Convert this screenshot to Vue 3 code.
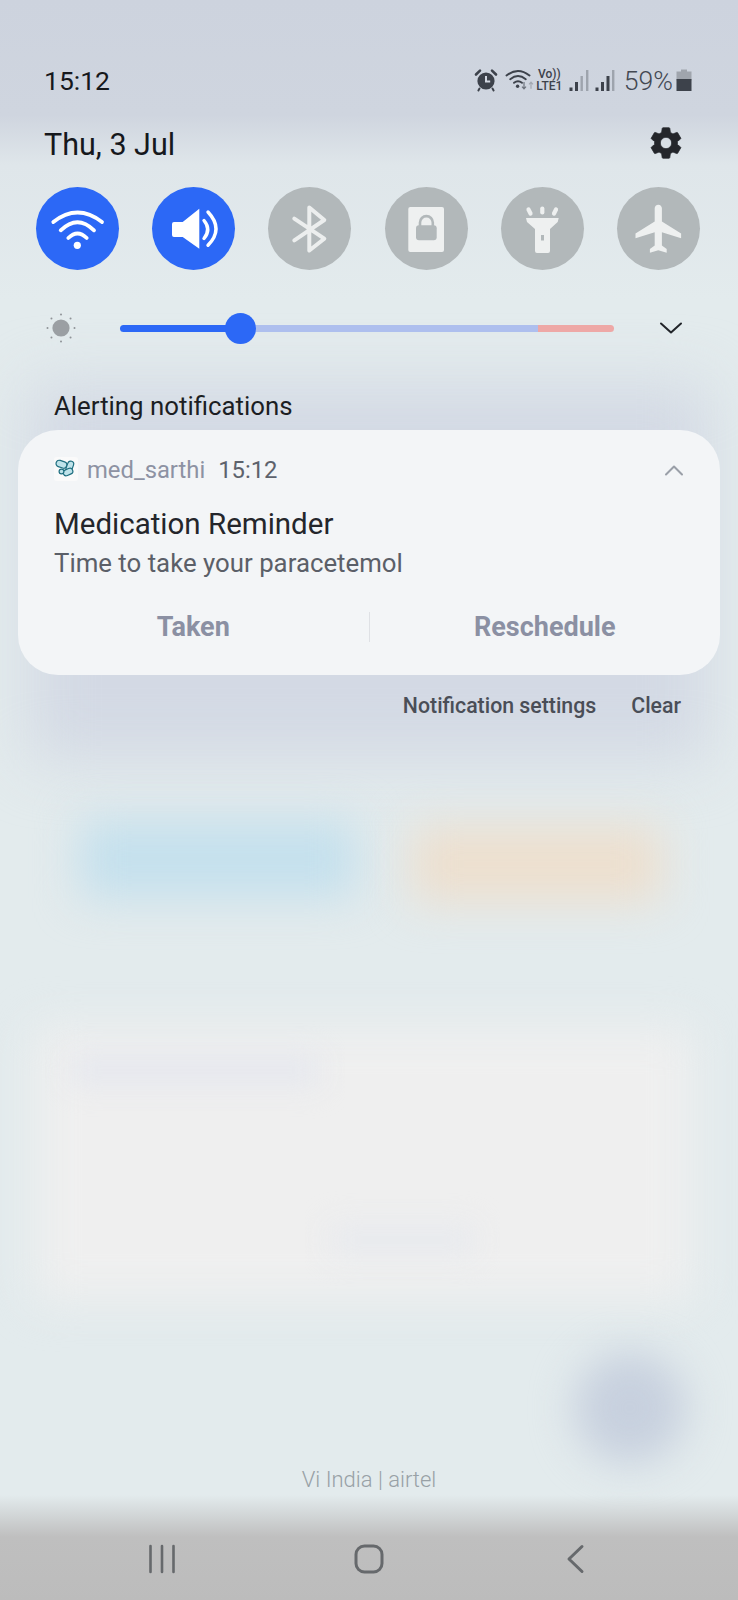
<script setup>
const gearPath = 'M19.14 12.94c.04-.3.06-.61.06-.94 0-.32-.02-.64-.07-.94l2.03-1.58c.18-.14.23-.41.12-.61l-1.92-3.32c-.12-.22-.37-.29-.59-.22l-2.39.96c-.5-.38-1.03-.7-1.62-.94l-.36-2.54c-.04-.24-.24-.41-.48-.41h-3.84c-.24 0-.43.17-.47.41l-.36 2.54c-.59.24-1.13.57-1.62.94l-2.39-.96c-.22-.08-.47 0-.59.22L2.74 8.87c-.12.21-.08.47.12.61l2.03 1.58c-.05.3-.09.63-.09.94s.02.64.07.94l-2.03 1.58c-.18.14-.23.41-.12.61l1.92 3.32c.12.22.37.29.59.22l2.39-.96c.5.38 1.03.7 1.62.94l.36 2.54c.05.24.24.41.48.41h3.84c.24 0 .44-.17.47-.41l.36-2.54c.59-.24 1.13-.56 1.62-.94l2.39.96c.22.08.47 0 .59-.22l1.92-3.32c.12-.22.07-.47-.12-.61l-2.01-1.58zM12 15.6c-1.98 0-3.6-1.62-3.6-3.6s1.62-3.6 3.6-3.6 3.6 1.62 3.6 3.6-1.62 3.6-3.6 3.6z'

// sun rays around the brightness icon
const sunDots = Array.from({ length: 8 }, (_, i) => {
  const a = (i * Math.PI) / 4
  return { x: 15 + Math.cos(a) * 13.5, y: 15 + Math.sin(a) * 13.5 }
})

// blurred shade content behind the panel
const blobs = [
  { name: 'band' },
  { name: 'blue' },
  { name: 'orange' },
  { name: 'panel' },
  { name: 'panel-a' },
  { name: 'panel-b' },
  { name: 'fab' }
]
</script>

<template>
  <div class="shade">
    <div class="backdrop">
      <div v-for="b in blobs" :key="b.name" class="blob" :class="b.name"></div>
    </div>

    <div class="status">
      <span class="clock">15:12</span>
      <div class="status-icons">
        <svg class="ic-alarm" width="24" height="24" viewBox="0 0 24 24">
          <circle cx="12" cy="13" r="8.6" fill="#3d424b" />
          <path d="M12 8v5.4h4.2" fill="none" stroke="#d3d8e2" stroke-width="2" />
          <path d="M2 6.5 6 2.6M22 6.5 18 2.6" stroke="#3d424b" stroke-width="2.6" stroke-linecap="round" />
          <path d="M5.5 20.5 4.4 22.4M18.5 20.5l1.1 1.9" stroke="#3d424b" stroke-width="2" stroke-linecap="round" />
        </svg>
        <svg class="ic-wifi" width="30" height="22" viewBox="0 0 30 22">
          <g fill="none" stroke="#3d424b" stroke-width="1.9" stroke-linecap="round">
            <path d="M1.5 6.5Q13 -2.5 24.5 6.5" />
            <path d="M5.2 10.2Q13 4 20.8 10.2" />
            <path d="M9 13.8Q13 10.6 17 13.8" />
          </g>
          <circle cx="12.6" cy="17.2" r="1.7" fill="#3d424b" />
          <path d="M19 13v6.4M17 17.6l2 2.2 2-2.2" fill="none" stroke="#6c727c" stroke-width="1.2" />
          <path d="M26 19.8v-6.4M24 15.4l2-2.2 2 2.2" fill="none" stroke="#a3a8b1" stroke-width="1.2" />
        </svg>
        <div class="volte"><span>Vo))</span><span>LTE1</span></div>
        <svg class="ic-signal" width="20" height="23" viewBox="0 0 20 23">
          <rect x="0.5" y="18.5" width="3" height="3.5" fill="#3d424b" />
          <rect x="6" y="13" width="3" height="9" fill="#3d424b" />
          <rect x="11.5" y="7" width="2.4" height="15" fill="#9ea4ad" />
          <rect x="17" y="1" width="2.4" height="21" fill="#9ea4ad" />
        </svg>
        <svg class="ic-signal" width="20" height="23" viewBox="0 0 20 23">
          <rect x="0.5" y="18.5" width="3" height="3.5" fill="#3d424b" />
          <rect x="6" y="13" width="3" height="9" fill="#3d424b" />
          <rect x="11.5" y="7" width="3" height="15" fill="#3d424b" />
          <rect x="17" y="1" width="2.4" height="21" fill="#9ea4ad" />
        </svg>
        <span class="battery-text">59%</span>
        <svg class="ic-battery" width="16" height="22" viewBox="0 0 16 22">
          <path d="M5 0.5h6v2h4.5v9H.5v-9H5z" fill="#a0a5ad" />
          <rect x="0.5" y="10" width="15" height="12" fill="#3d424b" />
        </svg>
      </div>
    </div>

    <div class="date-row">
      <span class="date">Thu, 3 Jul</span>
      <svg width="38" height="38" viewBox="0 0 24 24">
        <path :d="gearPath" fill="#24262b" stroke="#24262b" stroke-width="0.5" />
      </svg>
    </div>

    <div class="toggles">
      <div class="toggle on">
        <svg width="83" height="83" viewBox="0 0 83 83">
          <g fill="none" stroke="#fff" stroke-width="3.8" stroke-linecap="round">
            <path d="M17.3 35Q41.5 16 66 35" />
            <path d="M24.7 43.3Q41.5 27 58 43.3" />
            <path d="M32.3 51Q41.5 42 50.7 51" />
          </g>
          <circle cx="41.3" cy="58.3" r="3.6" fill="#fff" />
        </svg>
      </div>
      <div class="toggle on">
        <svg width="83" height="83" viewBox="0 0 83 83">
          <path d="M20 37q0-2 2-2h8.7l16.6-13.3V61.7L30.7 50H22q-2 0-2-2z" fill="#fff" />
          <g fill="none" stroke="#fff" stroke-width="3.4" stroke-linecap="round">
            <path d="M52 33.5Q59.5 42.5 52 51.5" />
            <path d="M56 25Q72 42 56 58.3" />
          </g>
        </svg>
      </div>
      <div class="toggle">
        <svg width="83" height="83" viewBox="0 0 83 83">
          <path d="M26.3 31.7 56.3 51.7 41.3 63.5V20.5L56.3 33 26.3 53.3" fill="none" stroke="#eceeee" stroke-width="4" stroke-linecap="round" stroke-linejoin="round" />
        </svg>
      </div>
      <div class="toggle">
        <svg width="83" height="83" viewBox="0 0 83 83">
          <rect x="23.3" y="20" width="35.7" height="45" rx="2" fill="#eef0f0" />
          <rect x="31" y="38.3" width="20.7" height="15" rx="3" fill="#b2b8ba" />
          <path d="M35 39v-3.5a6.4 6.4 0 0 1 12.8 0V39" fill="none" stroke="#b2b8ba" stroke-width="2.6" />
        </svg>
      </div>
      <div class="toggle">
        <svg width="83" height="83" viewBox="0 0 83 83">
          <path d="M25 31h32.7l-1 4-7.7 7V64q0 2-2 2H36q-2 0-2-2V42l-8-7z" fill="#eef0f0" />
          <rect x="40" y="48" width="3" height="5.5" fill="#b2b8ba" />
          <g stroke="#eef0f0" stroke-width="4.2" stroke-linecap="round">
            <path d="M27.5 22.5 29.5 26.5" />
            <path d="M41.3 21.5V25.5" />
            <path d="M55 22.5 53 26.5" />
          </g>
        </svg>
      </div>
      <div class="toggle">
        <svg width="83" height="83" viewBox="0 0 83 83">
          <path transform="translate(13.7 12.9) scale(2.4)" d="M21 16v-2l-8-5V3.5c0-.83-.67-1.5-1.5-1.5S10 2.67 10 3.5V9l-8 5v2l8-2.5V19l-2 1.5V22l3.5-1 3.5 1v-1.5L13 19v-5.5l8 2.5z" fill="#eef0f0" />
        </svg>
      </div>
    </div>

    <div class="brightness">
      <svg class="sun" width="30" height="30" viewBox="0 0 30 30">
        <circle cx="15" cy="15" r="8.6" fill="#9b9fa3" />
        <circle v-for="(d, i) in sunDots" :key="i" :cx="d.x" :cy="d.y" r="1" fill="#8f9397" />
      </svg>
      <div class="track">
        <div class="track-fill"></div>
        <div class="track-rest"></div>
        <div class="track-high"></div>
        <div class="thumb"></div>
      </div>
      <svg class="expand" width="24" height="14" viewBox="0 0 24 14">
        <path d="M2 2.5 12 11.5 22 2.5" fill="none" stroke="#22252a" stroke-width="2" stroke-linecap="round" stroke-linejoin="round" />
      </svg>
    </div>

    <div class="section-title">Alerting notifications</div>

    <div class="card">
      <div class="card-head">
        <svg class="app-icon" width="24" height="24" viewBox="0 0 24 24">
          <rect width="24" height="24" rx="3" fill="#fafafa" />
          <g fill="#bfe3ea" stroke="#1f6f80" stroke-width="1.2">
            <rect x="2" y="4" width="11" height="6.5" rx="3.2" transform="rotate(18 7.5 7)" />
            <rect x="13" y="4" width="6" height="11" rx="3" transform="rotate(20 16 9)" />
            <rect x="9" y="12" width="10" height="6" rx="3" transform="rotate(-25 14 15)" />
            <circle cx="7.5" cy="14.5" r="2.4" />
          </g>
        </svg>
        <span class="app-name">med_sarthi</span>
        <span class="app-time">15:12</span>
        <svg class="collapse" width="22" height="14" viewBox="0 0 22 14">
          <path d="M3 11.5 11 3.5 19 11.5" fill="none" stroke="#9a9fa8" stroke-width="2" stroke-linecap="round" stroke-linejoin="round" />
        </svg>
      </div>
      <div class="card-title">Medication Reminder</div>
      <div class="card-body">Time to take your paracetemol</div>
      <div class="card-actions">
        <button class="action">Taken</button>
        <span class="action-sep"></span>
        <button class="action">Reschedule</button>
      </div>
    </div>

    <div class="card-links">
      <span>Notification settings</span>
      <span>Clear</span>
    </div>

    <div class="carrier">Vi India | airtel</div>

    <div class="navbar">
      <svg width="40" height="30" viewBox="0 0 40 30">
        <path d="M8.5 2V28M20 2V28M31.5 2V28" stroke="#66696c" stroke-width="2.6" stroke-linecap="round" />
      </svg>
      <svg width="40" height="30" viewBox="0 0 40 30">
        <rect x="7" y="2" width="26" height="26" rx="8.5" fill="none" stroke="#66696c" stroke-width="3" />
      </svg>
      <svg width="40" height="30" viewBox="0 0 40 30">
        <path d="M27 2.5 14 15 27 27.5" fill="none" stroke="#66696c" stroke-width="3" stroke-linecap="round" stroke-linejoin="round" />
      </svg>
    </div>
  </div>
</template>

<style scoped>
.shade {
  position: relative;
  width: 738px;
  height: 1600px;
  overflow: hidden;
  display: flex;
  flex-direction: column;
  font-family: Roboto, "Liberation Sans", sans-serif;
  background: linear-gradient(180deg, #cdd3de 0, #cfd5df 115px, #dfe6ea 165px, #e3ebed 300px, #e3ebed 100%);
}

.backdrop {
  position: absolute;
  inset: 0;
  overflow: hidden;
}

.blob {
  position: absolute;
  filter: blur(22px);
}

.band {
  left: 30px;
  top: 385px;
  width: 678px;
  height: 375px;
  background: #d3d9e4;
  filter: blur(30px);
}

.blue {
  left: 80px;
  top: 820px;
  width: 276px;
  height: 78px;
  background: #c4e0ed;
}

.orange {
  left: 412px;
  top: 826px;
  width: 250px;
  height: 76px;
  background: #eddfce;
}

.panel {
  left: 36px;
  top: 1028px;
  width: 656px;
  height: 272px;
  background: #efefef;
}

.panel-a {
  left: 70px;
  top: 1054px;
  width: 250px;
  height: 32px;
  background: #e6e8ee;
  filter: blur(14px);
}

.panel-b {
  left: 330px;
  top: 1224px;
  width: 145px;
  height: 32px;
  background: #e8eaee;
  filter: blur(14px);
}

.fab {
  left: 574px;
  top: 1352px;
  width: 112px;
  height: 112px;
  border-radius: 50%;
  background: #c7d0de;
  filter: blur(20px);
}

.status,
.date-row,
.toggles,
.brightness,
.section-title,
.card,
.card-links,
.carrier,
.navbar {
  position: relative;
}

.status {
  margin-top: 64px;
  height: 32px;
  padding: 0 46px 0 44px;
  display: flex;
  align-items: center;
  justify-content: space-between;
}

.clock {
  font-size: 26.5px;
  color: #16181c;
}

.status-icons {
  display: flex;
  align-items: center;
}

.volte {
  display: flex;
  flex-direction: column;
  align-items: center;
  width: 27px;
  margin-left: 1px;
  font-size: 12px;
  line-height: 12px;
  font-weight: 500;
  color: #3d424b;
}

.ic-wifi {
  margin-left: 7px;
}

.ic-signal {
  margin-left: 6px;
}

.battery-text {
  margin-left: 9px;
  font-size: 26.6px;
  font-weight: 300;
  color: #434852;
}

.ic-battery {
  margin-left: 3px;
}

.date-row {
  margin-top: 27px;
  height: 40px;
  padding: 0 53px 0 44px;
  display: flex;
  align-items: center;
  justify-content: space-between;
}

.date {
  margin-top: 2px;
  font-size: 30.5px;
  color: #16181c;
}

.toggles {
  margin-top: 24px;
  padding: 0 38px 0 36px;
  display: flex;
  justify-content: space-between;
}

.toggle {
  width: 83px;
  height: 83px;
  border-radius: 50%;
  background: #b2b8ba;
}

.toggle.on {
  background: #2c68f6;
}

.toggle svg {
  display: block;
}

.brightness {
  margin-top: 43px;
  height: 30px;
  padding-left: 46px;
  display: flex;
  align-items: center;
}

.track {
  position: relative;
  margin-left: 44px;
  width: 494px;
  height: 7px;
  display: flex;
  border-radius: 4px;
}

.track-fill {
  width: 121px;
  background: #2c68f6;
  border-radius: 4px 0 0 4px;
}

.track-rest {
  width: 297px;
  background: #aebfee;
}

.track-high {
  width: 76px;
  background: #eea8a6;
  border-radius: 0 4px 4px 0;
}

.thumb {
  position: absolute;
  left: 105px;
  top: -12px;
  width: 31px;
  height: 31px;
  border-radius: 50%;
  background: #2c68f6;
}

.expand {
  margin-left: 45px;
}

.section-title {
  margin-top: 48px;
  height: 30px;
  padding-left: 54px;
  font-size: 25.8px;
  line-height: 30px;
  color: #1c1e23;
}

.card {
  margin: 9px 0 0 18px;
  width: 702px;
  height: 245px;
  border-radius: 40px;
  background: #f3f5f7;
  padding: 0 36px;
  box-sizing: border-box;
}

.card-head {
  height: 80px;
  display: flex;
  align-items: center;
}

.app-icon {
  margin-right: 9px;
  margin-top: -2px;
}

.app-name {
  font-size: 23.8px;
  color: #8d92a3;
}

.app-time {
  margin-left: 13px;
  font-size: 23.8px;
  color: #5d626c;
}

.collapse {
  margin-left: auto;
  margin-right: -1px;
}

.card-title {
  margin-top: -2px;
  font-size: 29.5px;
  line-height: 32px;
  color: #24262b;
}

.card-body {
  margin-top: 8px;
  font-size: 25.8px;
  line-height: 30px;
  color: #5b5f68;
}

.card-actions {
  margin: 29px -36px 0;
  display: flex;
  align-items: center;
}

.action {
  flex: 1;
  height: 40px;
  border: 0;
  padding: 0;
  background: none;
  font-family: inherit;
  font-size: 27px;
  font-weight: 700;
  color: #8b90a3;
}

.action-sep {
  width: 1px;
  height: 30px;
  background: #dfe1e5;
}

.card-links {
  margin-top: 16px;
  height: 30px;
  padding-right: 57px;
  display: flex;
  justify-content: flex-end;
  gap: 35px;
  font-size: 21.3px;
  line-height: 30px;
  font-weight: 500;
  color: #4a4e57;
}

.carrier {
  margin-top: auto;
  height: 30px;
  line-height: 30px;
  text-align: center;
  font-size: 22px;
  font-weight: 300;
  color: #98a1a6;
}

.navbar {
  height: 105px;
  box-sizing: border-box;
  padding: 49px 0 0 142px;
  display: flex;
  align-items: flex-start;
  gap: 166.5px;
  background: linear-gradient(180deg, rgba(189, 189, 189, 0) 0, #bfbfbf 42px, #bcbcbc 100%);
}
</style>
